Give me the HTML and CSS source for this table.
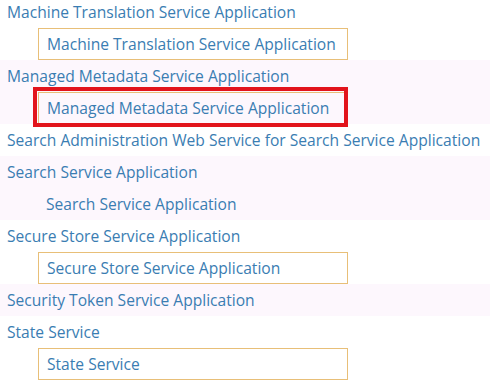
FILE: index.html
```html
<!DOCTYPE html>
<html lang="en">
<head>
    <meta charset="UTF-8">
    <title>Service Applications</title>
    <link rel="stylesheet" href="styles.css">
</head>
<body>
    <ul class="service-list">
        <li class="service-group">
            <div class="service-name">Machine Translation Service Application</div>
            <div class="proxy"><span class="proxy-box">Machine Translation Service Application</span></div>
        </li>
        <li class="service-group">
            <div class="service-name">Managed Metadata Service Application</div>
            <div class="proxy">
                <span class="proxy-box">Managed Metadata Service Application</span>
                <span class="marker"></span>
            </div>
        </li>
        <li class="service-group">
            <div class="service-name">Search Administration Web Service for Search Service Application</div>
        </li>
        <li class="service-group">
            <div class="service-name">Search Service Application</div>
            <div class="proxy"><span class="proxy-plain">Search Service Application</span></div>
        </li>
        <li class="service-group">
            <div class="service-name">Secure Store Service Application</div>
            <div class="proxy"><span class="proxy-box">Secure Store Service Application</span></div>
        </li>
        <li class="service-group">
            <div class="service-name">Security Token Service Application</div>
        </li>
        <li class="service-group">
            <div class="service-name">State Service</div>
            <div class="proxy"><span class="proxy-box">State Service</span></div>
        </li>
    </ul>
</body>
</html>
```

FILE: styles.css
```css
body {
    margin: 0;
    background: #fff;
    font-family: 'Open Sans', 'Noto Sans', sans-serif;
    font-size: 15.6px;
    color: #3a7db2;
}

.service-list {
    list-style: none;
    margin: -4px 0 0 0;
    padding: 0;
    width: 490px;
}

/* every other group gets the light row tint */
.service-group:nth-child(even) {
    background: #fdf7fd;
}

.service-name,
.proxy {
    height: 32px;
    display: flex;
    align-items: center;
}

.service-name {
    padding-left: 7px;
    white-space: nowrap;
}

.proxy {
    position: relative;
    padding-left: 38px;
}

.proxy-box,
.proxy-plain {
    box-sizing: border-box;
    width: 310px;
    height: 32px;
    display: flex;
    align-items: center;
    padding-left: 8px;
    white-space: nowrap;
}

.proxy-box {
    border: 1px solid #e8bf78;
}

.marker {
    position: absolute;
    left: 33px;
    top: -5px;
    width: 315px;
    height: 40px;
    box-sizing: border-box;
    border: 4px solid #e2141c;
}
```
